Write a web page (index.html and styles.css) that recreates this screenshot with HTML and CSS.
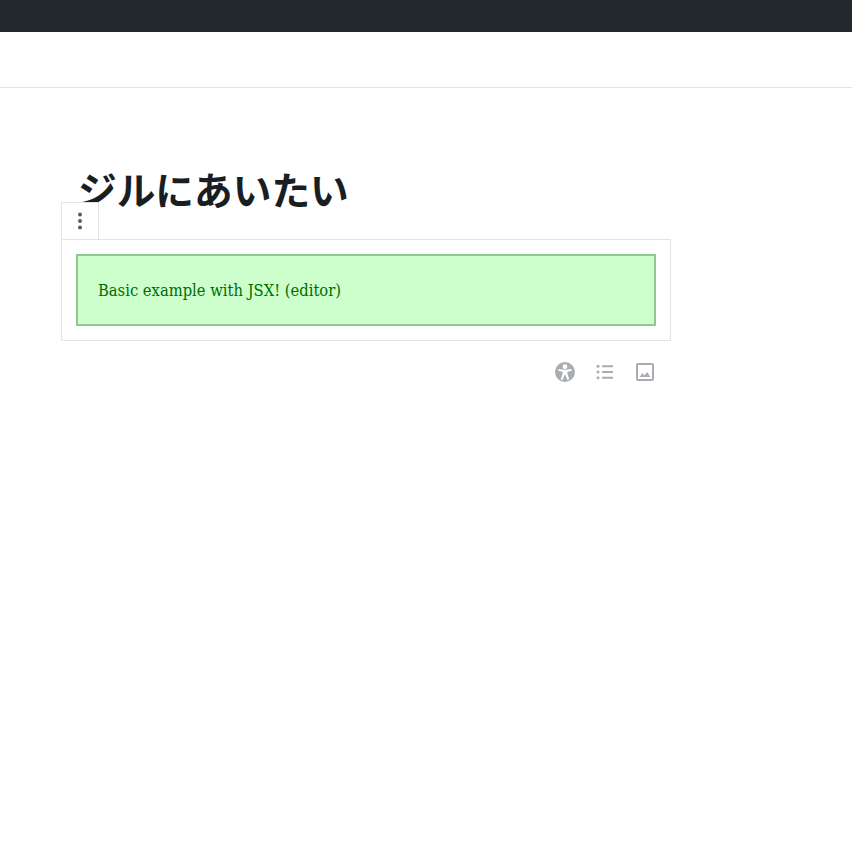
FILE: index.html
```html
<!DOCTYPE html>
<html lang="ja">
<head>
<meta charset="utf-8">
<title>ジルにあいたい</title>
<link rel="stylesheet" href="styles.css">
</head>
<body>
<div class="adminbar"></div>
<header class="toolbar"></header>
<main class="editor">
  <h1 class="title">ジルにあいたい</h1>
  <section class="block">
    <div class="mover">
      <svg width="24" height="24" viewBox="0 0 24 24" fill="#555d66"><circle cx="12" cy="5.5" r="2"/><circle cx="12" cy="12" r="2"/><circle cx="12" cy="18.5" r="2"/></svg>
    </div>
    <div class="notice">Basic example with JSX! (editor)</div>
  </section>
  <div class="inserters">
    <button class="ins" aria-label="Accessibility">
      <svg width="24" height="24" viewBox="0 0 24 24"><path fill="#a9adb2" fill-rule="evenodd" d="M12 2a10 10 0 1 0 0 20 10 10 0 0 0 0-20zm0 2.300a2.400 2.400 0 1 1 0 4.800 2.400 2.400 0 0 1 0-4.800zM18.800 10.800l-4.300 1v2.400l1.800 5-2 .7L12.500 15h-1l-1.800 4.900-2-.7 1.800-5v-2.400l-4.300-1 .4-1.900c4.100 1 8.700 1 12.800 0z"/></svg>
    </button>
    <button class="ins" aria-label="List">
      <svg width="24" height="24" viewBox="0 0 24 24"><path fill="#a9adb2" d="M9 5.200h11v2H9zM9 11h11v2H9zM9 16.800h11v2H9z"/><circle fill="#a9adb2" cx="5" cy="6.200" r="1.500"/><circle fill="#a9adb2" cx="5" cy="12" r="1.500"/><circle fill="#a9adb2" cx="5" cy="17.800" r="1.500"/></svg>
    </button>
    <button class="ins" aria-label="Image">
      <svg width="24" height="24" viewBox="0 0 24 24"><path fill="#a9adb2" d="M19 3H5a2 2 0 0 0-2 2v14a2 2 0 0 0 2 2h14a2 2 0 0 0 2-2V5a2 2 0 0 0-2-2zm0 16H5V5h14zM6.500 17l3-4 2 2.500 2.500-3.500 3.500 5z"/></svg>
    </button>
  </div>
</main>
</body>
</html>
```
FILE: styles.css
```css
* { box-sizing: border-box; }
html, body { margin: 0; padding: 0; background: #fff; }
body { height: 852px; overflow: hidden; font-family: "Liberation Serif", serif; }
.adminbar { height: 32px; background: #23282d; }
.toolbar { height: 56px; background: #fff; border-bottom: 1px solid #e2e4e7; }
.editor { width: 610px; margin-left: 61px; }
.title {
  margin: 0;
  padding: 76px 0 0 17px;
  height: 151px;
  font: 700 38.7px/48px "Noto Sans CJK JP", sans-serif;
  color: #191e23;
}
.block { position: relative; border: 1px solid #e2e4e7; padding: 14px; height: 102px; }
.mover {
  position: absolute; left: -1px; top: -38px;
  width: 38px; height: 38px;
  border: 1px solid #e2e4e7; background: #fff;
  display: flex; align-items: center; justify-content: center;
}
.notice {
  height: 72px;
  background: #cfc;
  border: 2px solid #8fc98f;
  color: #006b00;
  padding: 0 20px;
  display: flex; align-items: center;
  font-family: "DejaVu Serif Condensed", "DejaVu Serif", serif;
  font-stretch: condensed;
  font-size: 16.4px;
}
.inserters { display: flex; justify-content: flex-end; padding: 11px 6px 0 0; }
.ins { width: 40px; height: 40px; padding: 0; border: 0; background: none; display: flex; align-items: center; justify-content: center; }
```
